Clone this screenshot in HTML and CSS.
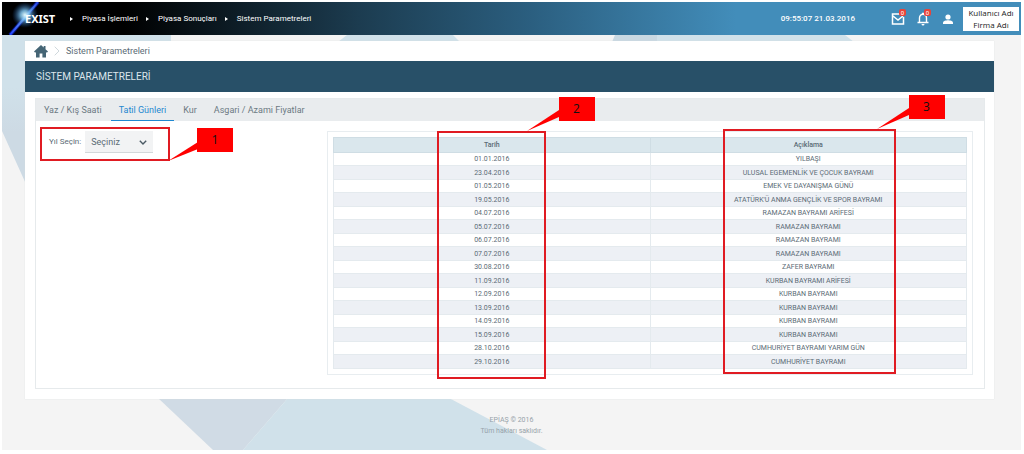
FILE: index.html
```html
<!DOCTYPE html>
<html lang="tr">
<head>
<meta charset="utf-8">
<meta name="viewport" content="width=device-width, initial-scale=1">
<title>Sistem Parametreleri</title>
<link rel="stylesheet" href="styles.css">
</head>
<body>
<div class="page">
  <svg class="backdrop" viewBox="0 0 1019 448" preserveAspectRatio="none" aria-hidden="true">
    <defs>
      <linearGradient id="edge" x1="0" y1="0" x2="0" y2="1"><stop offset=".35" stop-color="#d0e1ea"/><stop offset=".65" stop-color="#cddae4"/></linearGradient>
    </defs>
    <path fill="url(#edge)" d="M0 33H169V40H24V182L0 129Z"/>
    <path fill="#d0e1ea" d="M345 33H451L458 40H336Z"/>
    <path fill="#c8d8e2" d="M613 33H655V40H610Z"/>
    <path fill="#d0e1ea" d="M655 33H843L852 40H655Z"/>
    <path fill="#d0dbe5" d="M156 396H286L241 448H211Z"/>
    <path fill="#d0e1ea" d="M286 396H447L545 448H241Z"/>
  </svg>

  <header class="topbar">
    <a class="logo" href="#" aria-label="EXIST">
      <svg class="flare" viewBox="0 0 40 33" aria-hidden="true">
        <defs>
          <radialGradient id="glow"><stop offset="0" stop-color="#e4fbff"/><stop offset=".35" stop-color="#7cc0ea" stop-opacity=".85"/><stop offset="1" stop-color="#1450a0" stop-opacity="0"/></radialGradient>
          <linearGradient id="beam" x1="0" y1="1" x2="1" y2="0"><stop offset="0" stop-color="#1c3cf8"/><stop offset=".6" stop-color="#7fb4ff"/><stop offset="1" stop-color="#1c3ce0"/></linearGradient>
        </defs>
        <path d="M8 33L36 0" stroke="#0b1cb0" stroke-width="4" opacity=".7"/>
        <path d="M8 33L36 0" stroke="url(#beam)" stroke-width="2"/>
        <circle cx="23" cy="13" r="13" fill="url(#glow)"/>
      </svg>
      <span class="wordmark">EXIST</span>
    </a>
    <nav class="trail" aria-label="Menü">
      <a href="#">Piyasa İşlemleri</a>
      <a href="#">Piyasa Sonuçları</a>
      <a href="#">Sistem Parametreleri</a>
    </nav>
    <time class="clock">09:55:07 21.03.2016</time>
    <div class="actions">
      <button class="action" type="button" aria-label="Mesajlar">
        <svg viewBox="0 0 14 14"><path d="M9 2H1.5V12H12.5V5M2 4L7 8L12 4" fill="none" stroke="#fff" stroke-width="1.5"/></svg>
        <span class="badge">0</span>
      </button>
      <button class="action" type="button" aria-label="Bildirimler">
        <svg viewBox="0 0 14 14"><path d="M1.5 10.5H12.5M3.5 10.5V6C3.5 3.5 5 2.300 7 2.300S10.500 3.500 10.500 6V10.500" fill="none" stroke="#fff" stroke-width="1.4"/><path d="M5.500 12H8.500A1.500 1.500 0 0 1 5.500 12M6 .800H8V3H6Z" fill="#fff"/></svg>
        <span class="badge">0</span>
      </button>
      <button class="action" type="button" aria-label="Profil">
        <svg viewBox="0 0 14 14"><circle cx="7" cy="5" r="2.600" fill="#fff"/><path d="M2 12V10.800C2 9 5 8.300 7 8.300S12 9 12 10.800V12Z" fill="#fff"/></svg>
      </button>
    </div>
    <div class="user"><span>Kullanıcı Adı</span><span>Firma Adı</span></div>
  </header>

  <main class="card">
    <nav class="crumbs" aria-label="Konum">
      <a class="home" href="#" aria-label="Ana sayfa"><svg viewBox="0 0 14 13"><path d="M7 0L0 6.500L1.200 7.800L2 7.100V12.500H5.600V8.500H8.400V12.500H12V7.100L12.800 7.800L14 6.500L11.500 4.200V1H9.700V2.500Z" fill="#456575"/></svg></a>
      <svg class="sep" viewBox="0 0 6 10" aria-hidden="true"><path d="M.7.7L5 5L.7 9.300" fill="none" stroke="#cfd8dc"/></svg>
      <a href="#">Sistem Parametreleri</a>
    </nav>
    <h1 class="title">SİSTEM PARAMETRELERİ</h1>

    <section class="panel">
      <div class="tabs" role="tablist">
        <button class="tab" type="button" role="tab">Yaz / Kış Saati</button>
        <button class="tab active" type="button" role="tab" aria-selected="true">Tatil Günleri</button>
        <button class="tab" type="button" role="tab">Kur</button>
        <button class="tab" type="button" role="tab">Asgari / Azami Fiyatlar</button>
      </div>
      <div class="content">
        <div class="filter-column">
          <form class="filter">
            <label for="year">Yıl Seçin:</label>
            <span class="picker">
              <select id="year"><option>Seçiniz</option></select>
              <svg viewBox="0 0 8 5" aria-hidden="true"><path d="M.8.8L4 4L7.200.8" fill="none" stroke="#4a5a64" stroke-width="1.400"/></svg>
            </span>
            <div class="mark mark-year">
              <svg class="tail" viewBox="0 0 66 34"><path d="M0 33L30 14V21Z" fill="#f00"/></svg>
              <span class="tag">1</span>
            </div>
          </form>
        </div>
        <div class="table-panel">
          <div class="table-wrap">
            <table class="holidays">
              <thead><tr><th scope="col">Tarih</th><th scope="col">Açıklama</th></tr></thead>
              <tbody>
                <tr><td>01.01.2016</td><td>YILBAŞI</td></tr>
                <tr><td>23.04.2016</td><td>ULUSAL EGEMENLİK VE ÇOCUK BAYRAMI</td></tr>
                <tr><td>01.05.2016</td><td>EMEK VE DAYANIŞMA GÜNÜ</td></tr>
                <tr><td>19.05.2016</td><td>ATATÜRK'Ü ANMA GENÇLİK VE SPOR BAYRAMI</td></tr>
                <tr><td>04.07.2016</td><td>RAMAZAN BAYRAMI ARİFESİ</td></tr>
                <tr><td>05.07.2016</td><td>RAMAZAN BAYRAMI</td></tr>
                <tr><td>06.07.2016</td><td>RAMAZAN BAYRAMI</td></tr>
                <tr><td>07.07.2016</td><td>RAMAZAN BAYRAMI</td></tr>
                <tr><td>30.08.2016</td><td>ZAFER BAYRAMI</td></tr>
                <tr><td>11.09.2016</td><td>KURBAN BAYRAMI ARİFESİ</td></tr>
                <tr><td>12.09.2016</td><td>KURBAN BAYRAMI</td></tr>
                <tr><td>13.09.2016</td><td>KURBAN BAYRAMI</td></tr>
                <tr><td>14.09.2016</td><td>KURBAN BAYRAMI</td></tr>
                <tr><td>15.09.2016</td><td>KURBAN BAYRAMI</td></tr>
                <tr><td>28.10.2016</td><td>CUMHURİYET BAYRAMI YARIM GÜN</td></tr>
                <tr><td>29.10.2016</td><td>CUMHURİYET BAYRAMI</td></tr>
              </tbody>
            </table>
            <div class="mark mark-date">
              <svg class="tail" viewBox="0 0 32 34"><path d="M0 34L32 13V20Z" fill="#f00"/></svg>
              <span class="tag">2</span>
            </div>
            <div class="mark mark-text">
              <svg class="tail" viewBox="0 0 32 34"><path d="M0 34L32 13V20Z" fill="#f00"/></svg>
              <span class="tag">3</span>
            </div>
          </div>
        </div>
      </div>
    </section>
  </main>

  <footer class="footer"><span>EPİAŞ © 2016</span><span>Tüm hakları saklıdır.</span></footer>
</div>
</body>
</html>
```
FILE: styles.css
```css
* { box-sizing: border-box; }
body {
  margin: 0;
  padding: 2px 3px 4px 2px;
  background: #fff;
  color: #5b6b75;
  font: 8px/12px Roboto, "Liberation Sans", sans-serif;
}
a { color: inherit; text-decoration: none; }
button, select { font: inherit; color: inherit; border: 0; border-radius: 0; padding: 0; background: none; }
.page {
  position: relative;
  display: flex;
  flex-direction: column;
  min-height: calc(100vh - 6px);
  background: #f4f4f4;
}
.backdrop { position: absolute; inset: 0; width: 100%; height: 100%; }

.topbar {
  position: relative;
  display: flex;
  align-items: center;
  height: 33px;
  background: linear-gradient(90deg, #000 0%, #000 12%, #1c3c50 35%, #2b5f80 52%, #428dba 72%, #428dba 100%);
  color: #fff;
}
.logo { position: relative; display: flex; align-items: center; width: 68px; height: 33px; padding-left: 23px; }
.flare { position: absolute; left: 0; top: 0; width: 40px; height: 33px; }
.wordmark { position: relative; font: 700 11px/14px "Noto Sans", sans-serif; }
.trail { display: flex; gap: 8px; }
.trail a { display: flex; align-items: center; gap: 9px; }
.trail a::before { content: ""; border: 2px solid transparent; border-left: 3px solid #fff; border-right: 0; }
.clock { margin-left: auto; font-weight: 500; }
.actions { display: flex; gap: 11px; margin-left: 36px; }
.action { position: relative; width: 14px; height: 14px; }
.action svg { display: block; width: 14px; height: 14px; }
.badge {
  position: absolute;
  right: -1px;
  top: -3px;
  width: 7px;
  height: 7px;
  border-radius: 2px;
  background: #e8443a;
  font-size: 6px;
  line-height: 7px;
  text-align: center;
}
.user {
  display: flex;
  flex-direction: column;
  width: 56px;
  margin: 0 2px 0 8px;
  background: #fff;
  color: #222;
  font: 8px/12px "Open Sans", sans-serif;
  text-align: center;
}

.card {
  position: relative;
  margin: 6px 27px 0 23px;
  padding-bottom: 10px;
  background: #fff;
  box-shadow: 0 0 1px #d4d8da;
}
.crumbs { display: flex; align-items: center; height: 20px; padding-left: 9px; font-size: 9px; }
.home svg { display: block; width: 14px; height: 13px; }
.sep { width: 6px; height: 10px; margin: 0 6px; }
.title {
  margin: 0;
  padding: 0 11px;
  background: #285068;
  color: #dce6ec;
  font-size: 10px;
  font-weight: 400;
  line-height: 31px;
}
.panel { margin: 6px 9px 0 10px; border: 1px solid #e6eaec; }
.tabs { display: flex; gap: 1px; height: 22px; background: #e9ecee; font-size: 9px; }
.tab { padding: 0 8px; border-bottom: 1px solid transparent; color: #6c7a83; white-space: nowrap; }
.active { border-color: #1e88d0; color: #1e88d0; }
.content { display: grid; grid-template-columns: 291px 1fr; padding: 10px 11px 13px 0; }
.filter { position: relative; display: flex; align-items: center; gap: 4px; width: 130px; padding-left: 13px; }
.picker { position: relative; display: flex; }
.picker select {
  width: 68px;
  height: 22px;
  padding: 0 6px;
  border-bottom: 1px solid #d3d8da;
  background: #f2f3f4;
  font-size: 9px;
  appearance: none;
}
.picker svg { position: absolute; right: 6px; top: 9px; width: 8px; height: 5px; pointer-events: none; }
.table-panel { padding: 5px; border: 1px solid #e8edf0; }
.table-wrap { position: relative; }
.holidays {
  width: 100%;
  border-collapse: collapse;
  table-layout: fixed;
  font-size: 7px;
  line-height: 12px;
  text-align: center;
}
.holidays th { height: 15px; padding: 0; border: 1px solid #cfdde4; background: #dae7ed; font-weight: 500; }
.holidays td { height: 13px; padding: 0; border: 1px solid #e4eaee; }
.holidays tr:nth-child(even) td { height: 14px; background: #edf0f5; }

.mark { position: absolute; border: 2px solid #e01b22; pointer-events: none; }
.mark-year { left: 4px; top: -4px; width: 130px; height: 34px; }
.mark-date { left: 25%; top: -6px; bottom: -10px; width: 109px; margin-left: -55px; }
.mark-text { left: 75%; top: -8px; bottom: -5px; width: 173px; margin-left: -86px; }
.tail { position: absolute; width: 32px; height: 34px; right: -15px; top: -36px; }
.tag {
  position: absolute;
  right: -51px;
  top: -36px;
  width: 36px;
  height: 24px;
  background: #f00;
  color: #111;
  font: 12px/24px "Open Sans", sans-serif;
  text-align: center;
}
.mark-year .tail { width: 66px; right: -66px; top: -1px; }
.mark-year .tag { right: -65px; top: -1px; }

.footer {
  position: relative;
  display: flex;
  flex-direction: column;
  align-items: center;
  margin-top: 16px;
  color: #97a3aa;
  font-size: 7px;
  line-height: 11px;
}
```
